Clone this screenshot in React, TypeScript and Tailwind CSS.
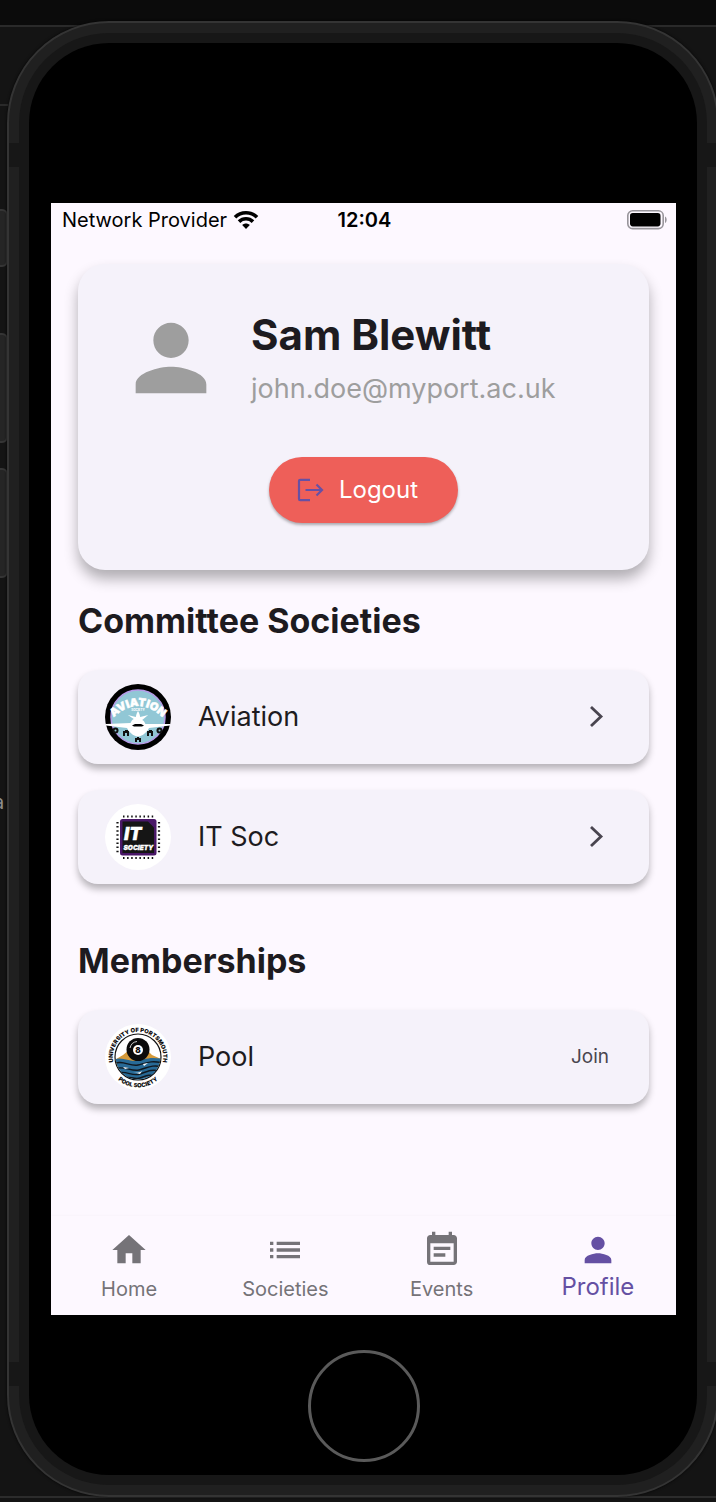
import type { ReactNode } from "react";
import { MdEventNote, MdHome, MdList, MdPerson } from "react-icons/md";

function WifiIcon() {
  return (
    <svg viewBox="0 0 26 20" className="h-5 w-[26px]" fill="none" stroke="#000" strokeWidth="3.6" aria-hidden="true">
      <path d="M2 7.2C8 1.2 18 1.2 24 7.2" />
      <path d="M6 11.6c4-3.9 10-3.9 14 0" />
      <path d="M9.2 14.9c2.3-2 5.300-2 7.600 0L13 19z" fill="#000" stroke="none" />
    </svg>
  );
}

function BatteryIcon() {
  return (
    <svg viewBox="0 0 40 20" className="h-5 w-10" aria-label="Battery full" role="img">
      <rect x="0.800" y="0.800" width="35.400" height="17.800" rx="4.800" fill="none" stroke="#98959b" strokeWidth="1.600" />
      <rect x="3" y="3" width="30.500" height="13.400" rx="2.800" fill="#000" />
      <path d="M38 6.600c2.200 1 2.200 5.400 0 6.400z" fill="#98959b" />
    </svg>
  );
}

function LogoutIcon() {
  return (
    <svg viewBox="0 0 28 24" className="h-6 w-7" fill="none" stroke="#6750a4" strokeWidth="2.200" aria-hidden="true">
      <path d="M13 1.800H3.200a1.200 1.200 0 0 0-1.200 1.200v18a1.200 1.200 0 0 0 1.200 1.200H13" />
      <path d="M8.500 12H25M19.500 6.500 25 12l-5.500 5.500" />
    </svg>
  );
}

function ChevronIcon() {
  return (
    <svg viewBox="0 0 24 24" className="size-6" fill="none" stroke="#49454f" strokeWidth="2.800" aria-hidden="true">
      <path d="m6 2 10 9.500L6 21" />
    </svg>
  );
}

function AviationLogo() {
  return (
    <svg viewBox="0 0 66 66" className="size-[66px]" role="img" aria-label="Aviation Society logo">
      <defs>
        <path id="aviation-arc" d="M5 37Q33 7 61 37" />
      </defs>
      <circle cx="33" cy="33" r="33" fill="#000" />
      <circle cx="33" cy="33" r="27" fill="#91c7d5" stroke="#b79ce8" strokeWidth="1.500" />
      <text fontFamily="Inter, sans-serif" fontSize="11" fontWeight="900" fill="#fff" stroke="#fff" strokeWidth="0.500" textAnchor="middle">
        <textPath href="#aviation-arc" startOffset="50%">AVIATION</textPath>
      </text>
      <path
        d="M33 27c1.300 2 1.800 4 2.200 6l8-2-6 5c2 1 2.500 2.500 3.300 4L65 40v1.500L44 44c-2 4-6 8-11 8.500C28 52 24 48 22 44L1 41.500V40l24.500-1c.8-1.500 1.300-3 3.300-4l-6-4 8 2c.4-2 .9-4 2.200-6z"
        fill="#fff"
      />
      <text x="33" y="27" fontFamily="Inter, sans-serif" fontSize="3" fontWeight="800" fill="#fff" textAnchor="middle">SOCIETY</text>
      <path d="M27 41.500l3-1.500h6l3 1.500-2 1h-8z" fill="#000" />
      <g fill="#111">
        <circle cx="10.500" cy="46.500" r="3" />
        <circle cx="54.500" cy="46.500" r="3" />
        <path d="M18 52v-5h2v-1h3v1h1v5h-2v-3h-2v3zM42 52v-5h2v-1h3v1h1v5h-2v-3h-2v3zM30 58v-4h2v-1h2v1h2v4h-2v-2h-2v2z" />
      </g>
      <circle cx="10.500" cy="46.500" r="1" fill="#91c7d5" />
      <circle cx="54.500" cy="46.500" r="1" fill="#91c7d5" />
    </svg>
  );
}

function ItLogo() {
  return (
    <svg viewBox="0 0 66 66" className="size-[66px]" role="img" aria-label="IT Society logo">
      <circle cx="33" cy="33" r="33" fill="#fff" />
      <path d="M18 12.500h31M18 54h31" stroke="#111" strokeWidth="2.200" strokeDasharray="1.500 2.600" />
      <path d="M12.500 18v31M54 18v31" stroke="#111" strokeWidth="2.200" strokeDasharray="1.500 2.600" />
      <rect x="15" y="15" width="36.500" height="36.500" rx="2.500" fill="#491767" />
      <path d="M17.500 17.500H43l6 6V49H17.500z" fill="#151515" />
      <g fontFamily="Inter, sans-serif" fontStyle="italic" fontWeight="900" fill="#fff" stroke="#fff" strokeWidth="0.300">
        <text x="19" y="35.500" fontSize="18">IT</text>
        <text x="18.500" y="46" fontSize="6.500">SOCIETY</text>
      </g>
    </svg>
  );
}

function PoolLogo() {
  return (
    <svg viewBox="0 0 66 66" className="size-[66px]" role="img" aria-label="University of Portsmouth Pool Society logo">
      <defs>
        <path id="pool-top" d="M8.500 39A25.200 25.200 0 1 1 57.500 39" />
        <path id="pool-bottom" d="M8 50A30 30 0 0 0 58 50" />
        <clipPath id="pool-clip">
          <circle cx="33" cy="33" r="22.500" />
        </clipPath>
      </defs>
      <circle cx="33" cy="33" r="33" fill="#fff" />
      <circle cx="33" cy="33" r="23" fill="#fff" stroke="#111" strokeWidth="1.200" />
      <g clipPath="url(#pool-clip)">
        <path d="M8 37l10-6 6-5h18l5 5 11 5v8H8z" fill="#d49a3b" />
        <path d="M8 36c9-4 16 2 23 1s13-5 27-2v25H8z" fill="#286a96" />
        <path
          d="M8 40c9-5 17 3 25 1s13-5 25-2M9 45c10-4 17 3 25 1s13-6 24-3M12 49c10-3 15 4 23 1s12-5 20-3M15 54c8-3 14 2 20 0s9-4 16-2"
          fill="none"
          stroke="#101820"
          strokeWidth="1.400"
        />
        <path d="M28 48c4 1 6 1 9-1l-2 3zM38 40l5-1-4 3zM18 43l6 1-4 1z" fill="#fff" />
      </g>
      <circle cx="33" cy="25.500" r="11.500" fill="#0b0b0b" />
      <path d="M25 24c1-4 3-6 7-6.500" fill="none" stroke="#fff" strokeWidth="0.800" />
      <circle cx="33" cy="26" r="5" fill="#fff" />
      <g fontFamily="Inter, sans-serif" fontWeight="900" fill="#111" textAnchor="middle">
        <text x="33" y="29" fontSize="8">8</text>
        <text fontSize="5.800">
          <textPath href="#pool-top" startOffset="50%">UNIVERSITY OF PORTSMOUTH</textPath>
        </text>
        <text fontSize="5.800">
          <textPath href="#pool-bottom" startOffset="50%">POOL SOCIETY</textPath>
        </text>
      </g>
    </svg>
  );
}

function SocietyRow({ logo, name, children }: { logo: ReactNode; name: string; children: ReactNode }) {
  return (
    <li>
      <button
        type="button"
        className="flex h-[94px] w-full items-center gap-[27px] rounded-[20px] bg-[#f5f2fa] pr-10 pl-[27px] text-left shadow-[0_5px_7px_rgba(0,0,0,0.28)]"
      >
        {logo}
        <span className="flex-1 text-[27px] leading-8 text-[#1d1b20]">{name}</span>
        {children}
      </button>
    </li>
  );
}

function NavItem({ icon, label }: { icon: ReactNode; label: string }) {
  return (
    <a href="#" className="flex flex-1 flex-col items-center text-[20px] leading-7 text-[#757378]">
      {icon}
      <span className="mt-[5px]">{label}</span>
    </a>
  );
}

function SideButton({ className }: { className: string }) {
  return <div className={`absolute -left-4 w-6 rounded-md border-2 border-[#353535] bg-[#252525] ${className}`} />;
}

function RingBand({ className }: { className: string }) {
  return <div className={`absolute h-6 w-[10px] bg-[#171717] ${className}`} />;
}

export default function App() {
  return (
    <div className="relative overflow-hidden bg-[#141414] pb-[5px] font-[Inter,'Noto_Sans',sans-serif]">
      <div className="absolute inset-x-0 top-0 h-[27px] border-b-2 border-[#2a2a2a] bg-[#0b0b0b]" />
      <div className="absolute top-[104px] left-0 h-0.5 w-2 bg-[#2a2a2a]" />
      <div className="absolute inset-x-0 bottom-1 h-0.5 bg-[#2c2c2c]" />
      <span className="absolute top-[790px] -left-[7px] text-[20px] leading-6 text-[#8d8d8d]">a</span>
      <SideButton className="top-[209px] h-[58px]" />
      <SideButton className="top-[333px] h-[110px]" />
      <SideButton className="top-[468px] h-[110px]" />

      <div className="relative mt-[21px] -mr-[3px] ml-[7px] rounded-[102px] border-2 border-[#343434] bg-[#202020] p-[10px] shadow-[0_0_3px_rgba(0,0,0,0.8)]">
        <RingBand className="top-[120px] left-0" />
        <RingBand className="top-[120px] right-0" />
        <RingBand className="bottom-[109px] left-0" />
        <RingBand className="right-0 bottom-[109px]" />
        <div className="rounded-[90px] bg-[#171717] p-[10px]">
          <div className="flex flex-col items-center rounded-[80px] bg-black pt-[160px] pr-[21px] pb-[13px] pl-[22px]">
            <div className="flex min-h-[1112px] w-full flex-col bg-[#fdf8ff]">
              <header className="grid grid-cols-3 items-center pt-[3px] pr-[9px] pb-px pl-[11px] text-[20px] leading-7 text-black">
                <div className="flex items-center gap-1.5 whitespace-nowrap">
                  <span>Network Provider</span>
                  <WifiIcon />
                </div>
                <span className="text-center font-semibold">12:04</span>
                <div className="flex justify-end">
                  <BatteryIcon />
                </div>
              </header>

              <main className="flex flex-1 flex-col px-[27px] pt-[29px]">
                <section className="flex h-[306px] flex-col items-center rounded-[27px] bg-[#f5f2fa] shadow-[0_9px_14px_rgba(0,0,0,0.3)]">
                  <div className="flex w-full items-center gap-[27px] px-10 pt-10">
                    <MdPerson className="size-[106px] text-[#9e9e9e]" aria-hidden="true" />
                    <div>
                      <h1 className="text-[42px] leading-[62px] font-bold text-[#1d1b20]">Sam Blewitt</h1>
                      <p className="text-[27px] leading-[46px] text-[#9e9e9e]">john.doe@myport.ac.uk</p>
                    </div>
                  </div>
                  <button
                    type="button"
                    className="mt-[45px] flex h-[66px] items-center gap-[14px] rounded-full bg-[#ee5f59] pr-10 pl-7 text-[24px] leading-8 text-white shadow-[0_2px_3px_rgba(0,0,0,0.3)]"
                  >
                    <LogoutIcon />
                    Logout
                  </button>
                </section>

                <h2 className="mt-7 text-[34px] leading-[46px] font-bold text-[#1d1b20]">Committee Societies</h2>
                <ul className="mt-[26px] flex flex-col gap-[26px]">
                  <SocietyRow logo={<AviationLogo />} name="Aviation">
                    <ChevronIcon />
                  </SocietyRow>
                  <SocietyRow logo={<ItLogo />} name="IT Soc">
                    <ChevronIcon />
                  </SocietyRow>
                </ul>

                <h2 className="mt-[54px] text-[34px] leading-[46px] font-bold text-[#1d1b20]">Memberships</h2>
                <ul className="mt-[26px]">
                  <SocietyRow logo={<PoolLogo />} name="Pool">
                    <span className="text-[19px] leading-6 text-[#49454f]">Join</span>
                  </SocietyRow>
                </ul>
              </main>

              <nav className="flex h-[99px] items-start pt-[14px] shadow-[0_-1px_2px_rgba(0,0,0,0.02)]">
                <NavItem icon={<MdHome className="size-10" />} label="Home" />
                <NavItem icon={<MdList className="size-10" />} label="Societies" />
                <NavItem icon={<MdEventNote className="size-10" />} label="Events" />
                <a href="#" aria-current="page" className="flex flex-1 flex-col items-center text-[24px] leading-7 text-[#6550a3]">
                  <MdPerson className="size-10" />
                  <span className="mt-[3px]">Profile</span>
                </a>
              </nav>
            </div>
            <button
              type="button"
              aria-label="Home button"
              className="mt-[35px] size-28 rounded-full border-[3px] border-[#5a5a5a] bg-black"
            />
          </div>
        </div>
      </div>
    </div>
  );
}
